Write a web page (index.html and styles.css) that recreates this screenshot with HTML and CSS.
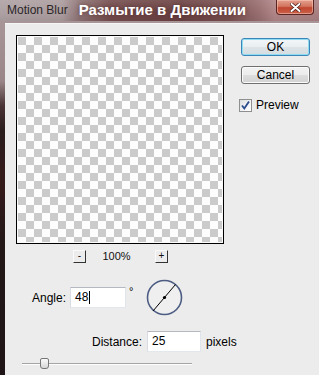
FILE: index.html
```html
<!DOCTYPE html>
<html>
<head>
<meta charset="utf-8">
<link rel="stylesheet" href="styles.css">
</head>
<body>
<div class="window">
  <div class="titlebar">
    <span class="title">Motion Blur</span>
    <span class="caption">Размытие в Движении</span>
    <span class="close"><svg width="11" height="9" viewBox="0 0 11 9"><path d="M1.5 1 L9.5 8 M9.5 1 L1.5 8" stroke="#4a1a14" stroke-width="3.4" stroke-linecap="round"/><path d="M1.5 1 L9.5 8 M9.5 1 L1.5 8" stroke="#fff" stroke-width="2" stroke-linecap="round"/></svg></span>
  </div>
  <div class="frame">
    <div class="client">
      <div class="left">
        <div class="preview"><div class="checker"></div></div>
        <div class="zoomrow">
          <span class="zbtn">-</span>
          <span class="zval">100%</span>
          <span class="zbtn">+</span>
        </div>
        <div class="anglerow">
          <span class="lbl angle-lbl">Angle:</span>
          <div class="field angle-field">48<span class="caret"></span></div>
          <span class="deg">°</span>
          <svg class="dial" width="37" height="37" viewBox="0 0 37 37">
            <circle cx="18.5" cy="18.5" r="17" fill="#efefef" stroke="#4c5c82" stroke-width="1.6"/>
            <line x1="7" y1="32" x2="29.5" y2="5.5" stroke="#000" stroke-width="1"/>
            <circle cx="18.5" cy="18.5" r="1.6" fill="#000"/>
          </svg>
        </div>
        <div class="distrow">
          <span class="lbl dist-lbl">Distance:</span>
          <div class="field dist-field">25</div>
          <span class="unit">pixels</span>
        </div>
        <div class="slider">
          <div class="track"></div>
          <div class="thumb"></div>
        </div>
      </div>
      <div class="right">
        <button class="btn default">OK</button>
        <button class="btn cancel">Cancel</button>
        <div class="check">
          <span class="box"><svg width="11" height="11" viewBox="0 0 11 11"><path d="M2 5.5 L4.3 8.5 L9 1.5" fill="none" stroke="#2a4b8d" stroke-width="1.8"/></svg></span>
          <span class="check-lbl">Preview</span>
        </div>
      </div>
    </div>
  </div>
</div>
</body>
</html>
```

FILE: styles.css
```css
* { box-sizing: border-box; }
html, body { margin: 0; padding: 0; }
body {
  width: 319px;
  height: 375px;
  overflow: hidden;
  font-family: "Liberation Sans", Arial, sans-serif;
  font-size: 12px;
  color: #000;
  background: #ececec;
}
.window {
  display: flex;
  flex-direction: column;
  width: 319px;
  height: 375px;
}
.titlebar {
  flex: none;
  height: 21px;
  display: flex;
  align-items: flex-start;
  background:
    linear-gradient(to bottom, rgba(255,255,255,0.10) 0, rgba(255,255,255,0) 60%, rgba(0,0,0,0.06) 100%),
    linear-gradient(to right, #aea1a3 0, #ab9c9e 62px, #8d7172 80px, #744c4d 110px, #6c4243 180px, #7a5050 230px, #9a7072 260px, #b08688 275px, #a88082 100%);
}
.title {
  margin: 3px 0 0 7px;
  font-size: 12px;
  line-height: 14px;
  color: #2a2628;
}
.caption {
  margin: 1px 0 0 11px;
  font-size: 15px;
  line-height: 18px;
  font-weight: bold;
  color: #fff;
  text-shadow: 0 0 4px rgba(60,20,20,0.5);
}
.close {
  margin-left: auto;
  margin-right: 5px;
  width: 38px;
  height: 15px;
  display: flex;
  align-items: center;
  justify-content: center;
  border: 1px solid #5a2520;
  border-top: none;
  border-radius: 0 0 4px 4px;
  background: linear-gradient(to bottom, #e4a08e 0, #d27560 45%, #c0452e 55%, #c9614a 100%);
  box-shadow: inset 0 0 0 1px rgba(255,210,200,0.5);
}
.frame {
  flex: 1;
  display: flex;
  padding-top: 2px;
  background: linear-gradient(to bottom, #a79597 0, #9a8688 60px, #4a3334 85px, #2a1c1d 110px, #361a1b 160px, #231718 220px, #1f1516 100%);
}
.client {
  flex: 1;
  margin-left: 5px;
  display: flex;
  background: #ececec;
  border-top: 1px solid #f6f6f6;
}
.left {
  width: 236px;
  flex: none;
  display: flex;
  flex-direction: column;
}
.preview {
  margin: 11px 0 0 11px;
  width: 208px;
  height: 209px;
  border: 1px solid #000;
  padding: 1px;
  background: #fbfbfb;
}
.checker {
  width: 100%;
  height: 100%;
  background: repeating-conic-gradient(#fdfdfd 0 25%, #cbcbcb 0 50%) 0 0 / 16px 16px;
}
.zoomrow {
  margin: 6px 0 0 68px;
  width: 95px;
  height: 13px;
  display: grid;
  grid-template-columns: 13px 1fr 13px;
  align-items: center;
}
.zbtn {
  width: 13px;
  height: 13px;
  border: 1px solid;
  border-color: #fafafa #333 #333 #fafafa;
  background: #ececec;
  font-size: 10px;
  line-height: 10px;
  text-align: center;
  color: #111;
}
.zval {
  font-size: 11px;
  line-height: 13px;
  text-align: center;
  padding-right: 8px;
  color: #111;
}
.anglerow, .distrow {
  display: flex;
  align-items: center;
}
.anglerow {
  margin-top: 16px;
  height: 37px;
}
.distrow {
  margin-top: 15px;
  height: 21px;
}
.lbl {
  text-align: right;
}
.angle-lbl { width: 61px; }
.dist-lbl { width: 137px; }
.field {
  height: 21px;
  border: 1px solid;
  border-color: #b5b8c0 #e0e5ec #e3e8ee #d9dce4;
  background: #fff;
  padding-left: 4px;
  line-height: 19px;
  font-size: 12px;
  display: flex;
  align-items: center;
}
.angle-field { margin-left: 4px; width: 56px; }
.dist-field { margin-left: 5px; width: 54px; }
.caret {
  display: inline-block;
  width: 1px;
  height: 13px;
  background: #000;
  margin-left: 1px;
}
.deg {
  width: 20px;
  padding-left: 3px;
  align-self: flex-start;
  margin-top: 6px;
  font-size: 11px;
  line-height: 12px;
}
.dial { display: block; }
.unit { margin-left: 5px; }
.slider {
  position: relative;
  margin: 6px 0 0 17px;
  width: 170px;
  height: 11px;
  display: flex;
  align-items: center;
}
.track {
  width: 100%;
  height: 2px;
  border-top: 1px solid #a5a5a5;
  border-bottom: 1px solid #fdfdfd;
}
.thumb {
  position: absolute;
  left: 18px;
  top: 0;
  width: 9px;
  height: 11px;
  border: 1px solid #777;
  border-radius: 2px 2px 3px 3px;
  background: linear-gradient(to bottom, #fafafa, #d6d6d6);
}
.right {
  display: flex;
  flex-direction: column;
  align-items: flex-start;
}
.btn {
  display: block;
  width: 69px;
  height: 18px;
  padding: 0;
  border: 1px solid #707070;
  border-radius: 3px;
  font-family: "Liberation Sans", Arial, sans-serif;
  font-size: 12px;
  line-height: 15px;
  color: #000;
  background: linear-gradient(to bottom, #f3f3f3 0, #ececec 50%, #dedede 51%, #d2d2d2 100%);
  box-shadow: inset 0 0 0 1px #fbfbfb;
}
.btn.default {
  margin-top: 14px;
  border-color: #3a86b8;
  background: linear-gradient(to bottom, #f2f6f8 0, #e9eef0 50%, #dde4e8 51%, #d4dce0 100%);
  box-shadow: inset 0 0 0 1px #8fdcf2;
}
.btn.cancel { margin-top: 10px; }
.check {
  margin: 15px 0 0 -2px;
  display: flex;
  align-items: center;
  height: 13px;
}
.box {
  width: 13px;
  height: 13px;
  border: 1px solid #8e8f8f;
  background: linear-gradient(135deg, #dcdde0 0, #f4f4f6 60%, #fff 100%);
  display: flex;
  align-items: center;
  justify-content: center;
}
.box svg { display: block; }
.check-lbl {
  margin-left: 4px;
  line-height: 13px;
}
```
